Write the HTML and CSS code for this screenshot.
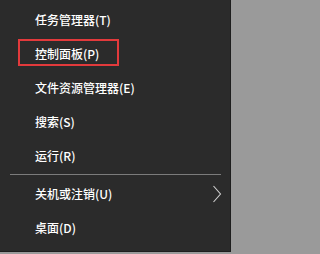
FILE: index.html
```html
<!DOCTYPE html>
<html lang="zh-CN">
<head>
<meta charset="utf-8">
<link rel="stylesheet" href="styles.css">
</head>
<body>
<div class="menu">
  <div class="item">任务管理器(T)</div>
  <div class="item highlighted"><span class="mark"></span>控制面板(P)</div>
  <div class="item">文件资源管理器(E)</div>
  <div class="item">搜索(S)</div>
  <div class="item">运行(R)</div>
  <div class="sep"></div>
  <div class="item sub">关机或注销(U)
    <svg class="chev" width="10" height="18" viewBox="0 0 10 18"><polyline points="1.5,1 8.5,9 1.5,17" fill="none" stroke="#d0d0d0" stroke-width="1.1"/></svg>
  </div>
  <div class="item">桌面(D)</div>
</div>
</body>
</html>
```
FILE: styles.css
```css
html, body {
  margin: 0;
  padding: 0;
  background: #9a9a9a;
}
body {
  width: 233px;
  height: 254px;
  overflow: hidden;
}
.menu {
  box-sizing: border-box;
  width: 231px;
  height: 252px;
  background: #2b2b2b;
  border-right: 1px solid #1e1e1e;
  border-bottom: 1px solid #1e1e1e;
  padding-top: 3px;
  font-family: "Noto Sans CJK SC", "Microsoft YaHei", sans-serif;
  font-size: 12px;
  font-weight: 500;
  color: #ffffff;
}
.item {
  position: relative;
  height: 34px;
  line-height: 34px;
  padding-left: 35px;
  white-space: nowrap;
}
.sep {
  height: 1px;
  margin: 1px 9px 2px 10px;
  background: #7c7c7c;
}
.mark {
  position: absolute;
  left: 18px;
  top: 2px;
  width: 97px;
  height: 23px;
  border: 2px solid #e23a3c;
}
.chev {
  position: absolute;
  left: 212px;
  top: 8px;
}
```
